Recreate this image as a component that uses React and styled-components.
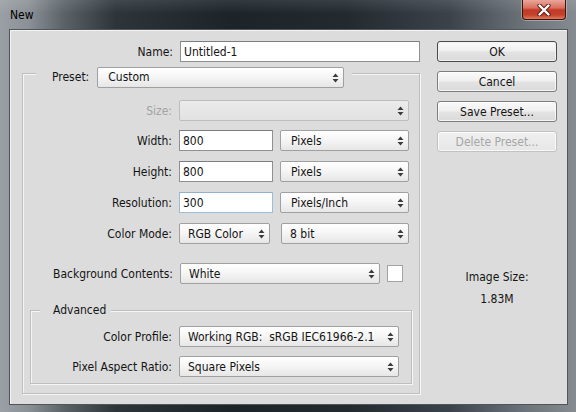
import React from 'react';
import styled, { createGlobalStyle } from 'styled-components';

const FONT = `"DejaVu Sans Condensed", "DejaVu Sans", sans-serif`;

const Global = createGlobalStyle`
  html, body { margin: 0; padding: 0; background: #1b2127; }
  body { width: 576px; height: 412px; overflow: hidden; }
  * { box-sizing: border-box; }
`;

const Window = styled.div`
  width: 576px;
  height: 412px;
  display: flex;
  flex-direction: column;
  background:
    linear-gradient(180deg, rgba(255,255,255,0.10) 0px, rgba(255,255,255,0) 14px),
    linear-gradient(90deg, #9aa0a5 0%, #8a9095 5%, #5b6369 11%, #2d343a 20%, #1c2329 40%, #222a30 60%, #3b434a 78%, #6f767c 92%, #858b90 100%);
  font-family: ${FONT};
  font-stretch: condensed;
  font-size: 12px;
  color: #141414;
`;

const TitleBar = styled.div`
  height: 29px;
  flex-shrink: 0;
  display: flex;
  align-items: flex-start;
  justify-content: space-between;
  padding: 0 10px;
`;

const TitleText = styled.span`
  display: block;
  margin-top: 8px;
  line-height: 14px;
  font-size: 12px;
  color: #000000;
  -webkit-text-fill-color: #000000;
`;

const CloseButton = styled.div`
  width: 44px;
  height: 20px;
  border: 1px solid #3a1510;
  border-top: none;
  border-radius: 0 0 4px 4px;
  box-shadow: 0 0 0 1px rgba(220,220,220,0.45);
  background: linear-gradient(180deg, #e9a79a 0%, #d86e5d 42%, #c23a27 52%, #c4402b 78%, #e27a5d 100%);
  display: flex;
  align-items: center;
  justify-content: center;
`;

const FrameBody = styled.div`
  flex: 1;
  display: flex;
  padding: 0 8px 7px 9px;
`;

const Client = styled.div`
  flex: 1;
  display: flex;
  background: #dcdcdc;
  border: 1px solid #4f555a;
  box-shadow: inset 1px 1px 0 #f3f3f3;
  padding: 11px 10px 0 12px;
`;

const LeftCol = styled.div`
  width: 398px;
  display: flex;
  flex-direction: column;
`;

const RightCol = styled.div`
  width: 120px;
  margin-left: 17px;
  display: flex;
  flex-direction: column;
`;

const Row = styled.div`
  display: flex;
  align-items: center;
  height: 21px;
  margin-top: ${p => p.$mt || 0}px;
  flex-shrink: 0;
`;

const Label = styled.span`
  width: ${p => p.$w}px;
  margin-right: 7px;
  text-align: right;
  white-space: nowrap;
  flex-shrink: 0;
  color: ${p => (p.$disabled ? '#a3a3a3' : '#141414')};
`;

const TextBox = styled.div`
  width: ${p => p.$w}px;
  height: 21px;
  background: #ffffff;
  border: 1px solid ${p => (p.$focus ? '#9fbcd6' : '#8f9091')};
  border-top-color: ${p => (p.$focus ? '#8fb0cf' : '#7c7d7e')};
  display: flex;
  align-items: center;
  padding-left: 3px;
  white-space: nowrap;
`;

const Select = styled.div`
  width: ${p => p.$w}px;
  height: 21px;
  margin-left: ${p => p.$ml || 0}px;
  border: 1px solid ${p => (p.$disabled ? '#bdbdbd' : '#a0a0a0')};
  border-radius: 2px;
  background: ${p =>
    p.$disabled
      ? 'linear-gradient(180deg, #ebebeb 0%, #e2e2e2 100%)'
      : 'linear-gradient(180deg, #ffffff 0%, #f6f6f6 45%, #e6e6e6 100%)'};
  display: flex;
  align-items: center;
  justify-content: space-between;
  padding: 0 4px 0 ${p => p.$pl || 8}px;
  white-space: nowrap;
  flex-shrink: 0;
`;

const Swatch = styled.div`
  width: 16px;
  height: 17px;
  margin-left: 7px;
  background: #ffffff;
  border: 1px solid #a3a3a3;
`;

const GroupBox = styled.div`
  margin: ${p => p.$margin};
  border: 1px solid #bebebe;
  box-shadow: inset 1px 1px 0 #f6f6f6, 1px 1px 0 #f6f6f6;
  padding-bottom: ${p => p.$pb}px;
  display: flex;
  flex-direction: column;
`;

const GroupHeader = styled.div`
  align-self: flex-start;
  display: flex;
  align-items: center;
  background: #dcdcdc;
  margin: ${p => p.$margin};
  padding: 0 ${p => p.$pr}px 0 ${p => p.$pl}px;
  height: ${p => p.$h}px;
  line-height: ${p => p.$h}px;
`;

const HeaderLabel = styled.span`
  margin-right: 8px;
`;

const Button = styled.div`
  height: 21px;
  margin-top: ${p => p.$mt || 0}px;
  border: 1px solid ${p => (p.$default ? '#4a4a4a' : p.$disabled ? '#c2c2c2' : '#7d7d7d')};
  border-radius: 3px;
  background: ${p =>
    p.$disabled
      ? 'linear-gradient(180deg, #f0f0f0 0%, #e6e6e6 100%)'
      : 'linear-gradient(180deg, #fafafa 0%, #efefef 48%, #e3e3e3 52%, #dadada 100%)'};
  box-shadow: ${p => (p.$default ? 'inset 0 0 0 1px #f2f2f2' : 'inset 0 0 0 1px rgba(255,255,255,0.7)')};
  color: ${p => (p.$disabled ? '#a6a6a6' : '#141414')};
  display: flex;
  align-items: center;
  justify-content: center;
`;

const InfoText = styled.div`
  margin-top: ${p => p.$mt}px;
  line-height: 14px;
  text-align: center;
`;

const Arrows = () => (
  <svg width="7" height="10" viewBox="0 0 7 10">
    <path d="M3.5 0.5L6.5 4H0.5Z" fill="#3c3c3c" />
    <path d="M0.5 6H6.5L3.5 9.5Z" fill="#3c3c3c" />
  </svg>
);

const DSelect = ({ w, children, disabled, pl, ml }) => (
  <Select $w={w} $disabled={disabled} $pl={pl} $ml={ml}>
    <span>{children}</span>
    <Arrows />
  </Select>
);

const CloseX = () => (
  <svg width="14" height="12" viewBox="0 0 14 12">
    <path d="M2.5 1.5L11.5 10.5M11.5 1.5L2.5 10.5" stroke="#5a1a12" strokeWidth="4.2" strokeLinecap="round" />
    <path d="M2.5 1.5L11.5 10.5M11.5 1.5L2.5 10.5" stroke="#ffffff" strokeWidth="2.4" strokeLinecap="round" />
  </svg>
);

export default function App() {
  return (
    <>
      <Global />
      <Window>
        <TitleBar>
          <TitleText>New</TitleText>
          <CloseButton>
            <CloseX />
          </CloseButton>
        </TitleBar>
        <FrameBody>
          <Client>
            <LeftCol>
              <Row>
                <Label $w={151}>Name:</Label>
                <TextBox $w={240}>Untitled-1</TextBox>
              </Row>

              <GroupBox $margin="11px 0 0 0" $pb={9}>
                <GroupHeader $margin="-7px 0 0 13px" $pl={16} $pr={8} $h={21}>
                  <HeaderLabel>Preset:</HeaderLabel>
                  <DSelect w={247} pl={10}>Custom</DSelect>
                </GroupHeader>

                <Row $mt={12}>
                  <Label $w={149} $disabled>Size:</Label>
                  <DSelect w={230} disabled></DSelect>
                </Row>
                <Row $mt={9}>
                  <Label $w={149}>Width:</Label>
                  <TextBox $w={94}>800</TextBox>
                  <DSelect w={129} ml={7} pl={10}>Pixels</DSelect>
                </Row>
                <Row $mt={10}>
                  <Label $w={149}>Height:</Label>
                  <TextBox $w={94}>800</TextBox>
                  <DSelect w={129} ml={7} pl={10}>Pixels</DSelect>
                </Row>
                <Row $mt={10}>
                  <Label $w={149}>Resolution:</Label>
                  <TextBox $w={94} $focus>300</TextBox>
                  <DSelect w={129} ml={7} pl={10}>Pixels/Inch</DSelect>
                </Row>
                <Row $mt={10}>
                  <Label $w={149}>Color Mode:</Label>
                  <DSelect w={91} pl={8}>RGB Color</DSelect>
                  <DSelect w={128} ml={11} pl={8}>8 bit</DSelect>
                </Row>
                <Row $mt={19}>
                  <Label $w={150}>Background Contents:</Label>
                  <DSelect w={200}>White</DSelect>
                  <Swatch />
                </Row>

                <GroupBox $margin="26px 7px 0 7px" $pb={6}>
                  <GroupHeader $margin="-8px 0 0 9px" $pl={13} $pr={5} $h={14}>
                    Advanced
                  </GroupHeader>
                  <Row $mt={9}>
                    <Label $w={141}>Color Profile:</Label>
                    <DSelect w={220}>Working RGB:&nbsp; sRGB IEC61966-2.1</DSelect>
                  </Row>
                  <Row $mt={9}>
                    <Label $w={141}>Pixel Aspect Ratio:</Label>
                    <DSelect w={220}>Square Pixels</DSelect>
                  </Row>
                </GroupBox>
              </GroupBox>
            </LeftCol>

            <RightCol>
              <Button $default>OK</Button>
              <Button $mt={9}>Cancel</Button>
              <Button $mt={9}>Save Preset...</Button>
              <Button $mt={9} $disabled>Delete Preset...</Button>
              <InfoText $mt={118}>Image Size:</InfoText>
              <InfoText $mt={8}>1.83M</InfoText>
            </RightCol>
          </Client>
        </FrameBody>
      </Window>
    </>
  );
}
